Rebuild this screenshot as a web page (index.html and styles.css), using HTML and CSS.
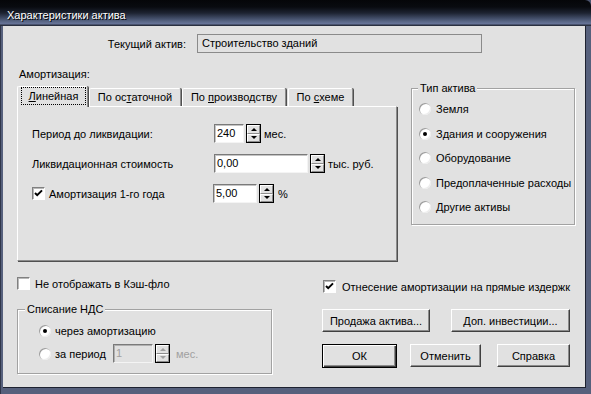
FILE: index.html
```html
<!DOCTYPE html>
<html lang="ru">
<head>
<meta charset="utf-8">
<title>Характеристики актива</title>
<link rel="stylesheet" href="styles.css">
</head>
<body>
<div class="window">
  <div class="titlebar"><span class="title">Характеристики актива</span></div>
  <div class="frame">
    <div class="client">
      <div class="current-row">
        <span class="current-label">Текущий актив:</span>
        <span class="current-box">Строительство зданий</span>
      </div>
      <div class="section-label">Амортизация:</div>

      <div class="main-row">
        <div class="tabs-col">
          <div class="tabs">
            <div class="tab active"><span class="focus"><span><u>Л</u>инейная</span></span></div>
            <div class="tab tab-rest"><span>По ос<u>т</u>аточной</span></div>
            <div class="tab tab-prod"><span>По <u>п</u>роизводству</span></div>
            <div class="tab tab-scheme"><span>По <u>с</u>хеме</span></div>
          </div>
          <div class="panel">
            <div class="frow">
              <span class="flabel">Период до ликвидации:</span>
              <span class="field w-period">240</span>
              <span class="spin"><span class="sb"><i class="up"></i></span><span class="sb"><i class="dn"></i></span></span>
              <span class="unit">мес.</span>
            </div>
            <div class="frow">
              <span class="flabel">Ликвидационная стоимость</span>
              <span class="field w-cost">0,00</span>
              <span class="spin"><span class="sb"><i class="up"></i></span><span class="sb"><i class="dn"></i></span></span>
              <span class="unit">тыс. руб.</span>
            </div>
            <div class="frow">
              <span class="flabel flabel-check">
                <span class="check"><svg width="9" height="9" viewBox="0 0 9 9"><polyline points="1,4 3.2,6.2 8,1.4" fill="none" stroke="#000" stroke-width="2"/></svg></span>
                <span class="check-text">Амортизация 1-го года</span>
              </span>
              <span class="field w-first">5,00</span>
              <span class="spin"><span class="sb"><i class="up"></i></span><span class="sb"><i class="dn"></i></span></span>
              <span class="unit unit-pct">%</span>
            </div>
          </div>
        </div>

        <div class="group type-group">
          <div class="legend">Тип актива</div>
          <div class="radio-list">
            <div class="radio-row"><span class="radio"></span><span>Земля</span></div>
            <div class="radio-row"><span class="radio on"><i></i></span><span>Здания и сооружения</span></div>
            <div class="radio-row"><span class="radio"></span><span>Оборудование</span></div>
            <div class="radio-row"><span class="radio"></span><span>Предоплаченные расходы</span></div>
            <div class="radio-row"><span class="radio"></span><span>Другие активы</span></div>
          </div>
        </div>
      </div>

      <div class="bottom-row">
        <div class="bottom-left">
          <div class="check-row"><span class="check"></span><span class="check-text">Не отображать в Кэш-фло</span></div>
          <div class="group vat-group">
            <div class="legend">Списание НДС</div>
            <div class="vat-list">
              <div class="vat-row vat-row1"><span class="radio on"><i></i></span><span class="radio-text">через амортизацию</span></div>
              <div class="vat-row vat-row2">
                <span class="radio"></span>
                <span class="radio-text period-text">за период</span>
                <span class="field field-disabled w-vat">1</span>
                <span class="spin spin-disabled"><span class="sb"><i class="up"></i></span><span class="sb"><i class="dn"></i></span></span>
                <span class="unit unit-disabled">мес.</span>
              </div>
            </div>
          </div>
        </div>

        <div class="bottom-right">
          <div class="check-row check-row-right">
            <span class="check"><svg width="9" height="9" viewBox="0 0 9 9"><polyline points="1,4 3.2,6.2 8,1.4" fill="none" stroke="#000" stroke-width="2"/></svg></span>
            <span class="check-text">Отнесение амортизации на прямые издержк</span>
          </div>
          <div class="btn-row btn-row1">
            <div class="btn btn-sale">Продажа актива...</div>
            <div class="btn btn-invest">Доп. инвестиции...</div>
          </div>
          <div class="btn-row btn-row2">
            <div class="btn btn-ok default">ОК</div>
            <div class="btn btn-cancel">Отменить</div>
            <div class="btn btn-help">Справка</div>
          </div>
        </div>
      </div>
    </div>
  </div>
</div>
</body>
</html>
```

FILE: styles.css
```css
* { box-sizing: border-box; }
html, body { margin: 0; padding: 0; }
body {
  width: 591px;
  height: 394px;
  overflow: hidden;
  font-family: "Liberation Sans", Arial, sans-serif;
  font-size: 11px;
  color: #000;
  background: #4c5570;
}
u { text-decoration: underline; text-underline-offset: 1px; }

.window {
  width: 591px;
  height: 394px;
  display: flex;
  flex-direction: column;
}

.titlebar {
  height: 26px;
  flex: none;
  display: flex;
  align-items: center;
  padding: 3px 0 0 7px;
  color: #fff;
  text-shadow: 1px 1px 0 #000;
  border-radius: 0 6px 0 0;
  background: linear-gradient(to bottom,
    #050609 0px, #090b10 7px, #1d2331 13px, #3f4a64 18px,
    #5d6a8a 22px, #68759a 24px, #2a3040 25px, #2a3040 26px);
}

.frame {
  flex: 1;
  display: flex;
  padding: 0 5px 6px 3px;
  background: linear-gradient(to right, #30364a 0, #30364a 1px, #56607c 1px, #56607c 100%);
}

.client {
  width: 583px;
  height: 362px;
  background: #e1e1e1;
  border-right: 1px solid #1e2230;
  border-bottom: 1px solid #1e2230;
}

/* top */
.current-row {
  display: flex;
  align-items: center;
  height: 19px;
  margin-top: 8px;
}
.current-label {
  width: 183px;
  text-align: right;
  margin-right: 11px;
}
.current-box {
  width: 285px;
  height: 19px;
  border: 1px solid #8a8a8a;
  padding-left: 4px;
  line-height: 17px;
}
.section-label {
  margin-top: 15px;
  padding-left: 16px;
  line-height: 13px;
  height: 13px;
}

/* main */
.main-row {
  display: flex;
  align-items: flex-start;
  margin-top: 5px;
  padding-left: 14px;
}
.tabs-col { width: 380px; flex: none; }
.tabs {
  display: flex;
  align-items: flex-start;
  height: 20px;
}
.tab {
  height: 18px;
  margin-top: 2px;
  display: flex;
  align-items: center;
  justify-content: center;
  background: #e1e1e1;
  border-left: 1px solid #fff;
  border-top: 1px solid #fff;
  border-right: 1px solid #8c8c8c;
  box-shadow: 1px 0 0 #505050;
  border-radius: 2px 2px 0 0;
  line-height: 13px;
  white-space: nowrap;
}
.tab.active {
  width: 71px;
  height: 21px;
  margin-top: 0;
  position: relative;
  z-index: 1;
  padding: 0 0 2px 3px;
  align-items: stretch;
}
.focus {
  flex: 1;
  display: flex;
  align-items: center;
  justify-content: center;
  border: 1px dotted #000;
  margin: 0 1px 0 0;
}
.tab-rest { width: 92px; margin-left: 1px; }
.tab-prod { width: 104px; margin-left: 1px; }
.tab-scheme { width: 65px; margin-left: 2px; }

.panel {
  height: 155px;
  border-left: 1px solid #fff;
  border-top: 1px solid #fff;
  border-right: 1px solid #8c8c8c;
  border-bottom: 1px solid #8c8c8c;
  box-shadow: 1px 1px 0 #505050;
  padding: 17px 0 0 14px;
}
.frow {
  display: flex;
  align-items: center;
  height: 19px;
}
.frow + .frow { margin-top: 11px; }
.flabel { width: 182px; flex: none; }
.flabel-check { width: 181px; display: flex; align-items: center; }
.check-text { margin-left: 4px; white-space: nowrap; }

.field {
  height: 19px;
  background: #fff;
  border: 1px solid;
  border-color: #7a7a7a #f4f4f4 #f4f4f4 #7a7a7a;
  box-shadow: inset 1px 1px 0 #c4c4c4;
  padding-left: 2px;
  line-height: 17px;
  flex: none;
}
.w-period { width: 30px; }
.w-cost { width: 94px; }
.w-first { width: 44px; }

.spin {
  width: 15px;
  height: 19px;
  margin-left: 2px;
  border: 1px solid #000;
  display: flex;
  flex-direction: column;
  flex: none;
}
.sb {
  flex: 1;
  display: flex;
  align-items: center;
  justify-content: center;
  background: #e1e1e1;
  border-top: 1px solid #fff;
  border-left: 1px solid #fff;
  border-right: 1px solid #8c8c8c;
  border-bottom: 1px solid #8c8c8c;
}
.up, .dn {
  display: block;
  width: 0;
  height: 0;
  border-left: 3px solid transparent;
  border-right: 3px solid transparent;
}
.up { border-bottom: 3px solid #000; }
.dn { border-top: 3px solid #000; }
.unit { margin-left: 3px; }
.unit-pct { margin-left: 4px; }

/* checkbox & radio */
.check {
  width: 13px;
  height: 13px;
  flex: none;
  background: #fff;
  border: 1px solid;
  border-color: #808080 #fff #fff #808080;
  box-shadow: inset 1px 1px 0 #b8b8b8;
  display: flex;
  align-items: center;
  justify-content: center;
}
.check svg { display: block; }
.radio {
  width: 12px;
  height: 12px;
  flex: none;
  border-radius: 50%;
  background: #fff;
  box-shadow: inset 1px 1px 0 #9c9c9c, inset -1px -1px 0 #ececec;
  display: flex;
  align-items: center;
  justify-content: center;
}
.radio.on i {
  display: block;
  width: 4px;
  height: 4px;
  border-radius: 50%;
  background: #000;
}

/* group boxes */
.group {
  border: 1px solid #a2a2a2;
  box-shadow: inset 1px 1px 0 #fff, 1px 1px 0 #fff;
  flex: none;
}
.legend {
  display: table;
  margin-top: -7px;
  margin-left: 7px;
  padding: 0 2px;
  background: #e1e1e1;
  line-height: 13px;
  height: 13px;
}
.type-group {
  width: 164px;
  height: 137px;
  margin-left: 14px;
  margin-top: 2px;
}
.type-group .legend { margin-left: 6px; }
.radio-list {
  margin-top: 2px;
  padding-left: 7px;
}
.radio-row {
  height: 24.5px;
  display: flex;
  align-items: center;
  white-space: nowrap;
}
.radio-row .radio { margin-right: 5px; }

/* bottom */
.bottom-row {
  display: flex;
  align-items: flex-start;
  padding-left: 14px;
}
.bottom-left { width: 255px; flex: none; }
.check-row {
  display: flex;
  align-items: center;
  height: 13px;
  margin-top: 16px;
}
.check-row .check-text { margin-left: 5px; }
.vat-group {
  width: 255px;
  height: 65px;
  margin-top: 19px;
}
.vat-list { padding-left: 21px; }
.vat-row { display: flex; align-items: center; white-space: nowrap; }
.vat-row1 { height: 20px; margin-top: 5px; }
.vat-row2 { height: 19px; margin-top: 3px; }
.radio-text { margin-left: 4px; }
.period-text { width: 58px; }
.field-disabled {
  background: #e1e1e1;
  color: #a0a0a0;
  border-color: #7a7a7a #f4f4f4 #f4f4f4 #7a7a7a;
  box-shadow: inset 1px 1px 0 #b0b0b0;
}
.w-vat { width: 40px; }
.spin-disabled .up { border-bottom-color: #a0a0a0; }
.spin-disabled .dn { border-top-color: #a0a0a0; }
.unit-disabled { color: #a0a0a0; margin-left: 6px; }

.bottom-right {
  width: 251px;
  margin-left: 50px;
  flex: none;
}
.check-row-right {
  margin-top: 19px;
  padding-left: 1px;
}
.check-row-right .check-text { margin-left: 6px; }
.btn-row { display: flex; }
.btn-row1 { margin-top: 16px; }
.btn-row2 { margin-top: 12px; }
.btn {
  height: 23px;
  display: flex;
  align-items: center;
  justify-content: center;
  background: #e1e1e1;
  border: 1px solid;
  border-color: #fff #404040 #404040 #fff;
  box-shadow: inset -1px -1px 0 #8c8c8c;
  flex: none;
  white-space: nowrap;
}
.btn.default {
  height: 24px;
  border: 1px solid #000;
  box-shadow: inset 1px 1px 0 #fff, inset -1px -1px 0 #404040, inset -2px -2px 0 #8c8c8c;
}
.btn-sale { width: 108px; }
.btn-invest { width: 119px; margin-left: 21px; }
.btn-ok { width: 75px; }
.btn-cancel { width: 71px; margin-left: 13px; }
.btn-help { width: 73px; margin-left: 16px; }
```
